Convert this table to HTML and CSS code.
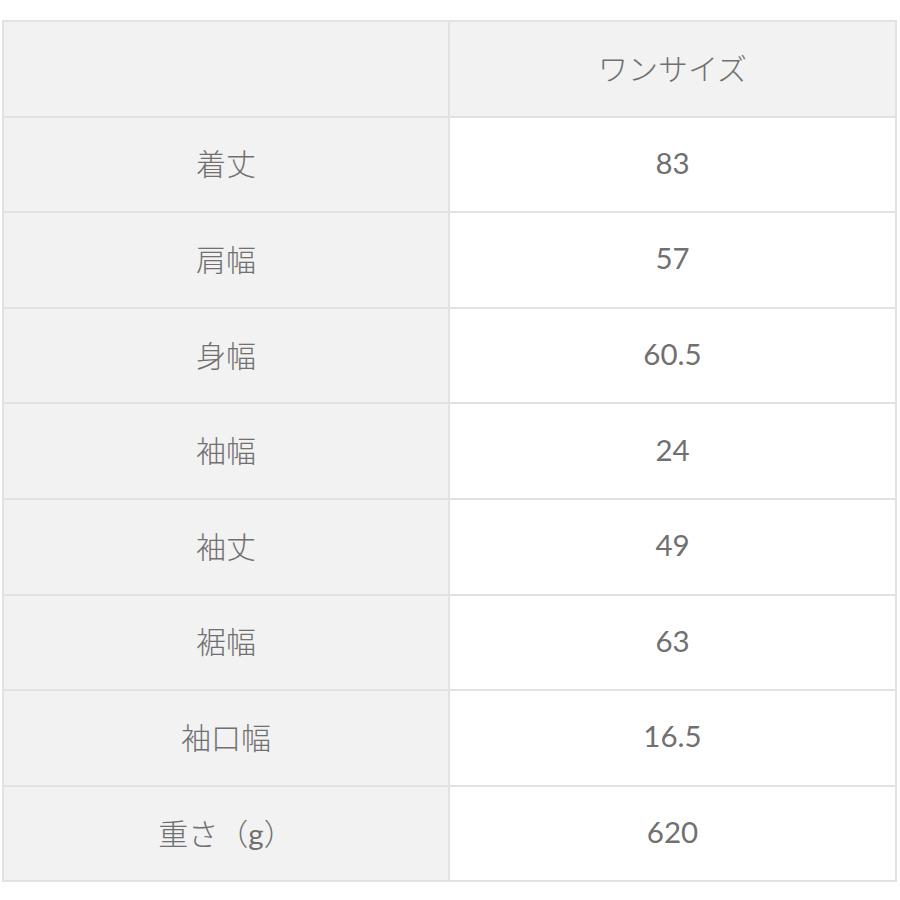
FILE: index.html
```html
<!DOCTYPE html>
<html lang="ja">
<head>
<meta charset="utf-8">
<title>サイズ表</title>
<link rel="stylesheet" href="styles.css">
</head>
<body>
<div class="wrap">
<table class="size-table">
  <thead>
    <tr><th class="label"></th><th class="head"><span class="jp">ワンサイズ</span></th></tr>
  </thead>
  <tbody>
    <tr><th class="label"><span class="jp">着丈</span></th><td>83</td></tr>
    <tr><th class="label"><span class="jp">肩幅</span></th><td>57</td></tr>
    <tr><th class="label"><span class="jp">身幅</span></th><td>60.5</td></tr>
    <tr><th class="label"><span class="jp">袖幅</span></th><td>24</td></tr>
    <tr><th class="label"><span class="jp">袖丈</span></th><td>49</td></tr>
    <tr><th class="label"><span class="jp">裾幅</span></th><td>63</td></tr>
    <tr><th class="label"><span class="jp">袖口幅</span></th><td>16.5</td></tr>
    <tr><th class="label"><span class="jp">重さ（</span>g<span class="jp">）</span></th><td>620</td></tr>
  </tbody>
</table>
</div>
</body>
</html>
```

FILE: styles.css
```css
html, body {
  margin: 0;
  padding: 0;
  background: #ffffff;
}
.wrap {
  padding: 20px 3px 0 2px;
}
.size-table {
  width: 895px;
  border-collapse: collapse;
  table-layout: fixed;
  font-family: Lato, "Noto Sans CJK JP", sans-serif;
  font-size: 29.5px;
  color: #707070;
}
.size-table th,
.size-table td {
  border: 2px solid #e2e2e2;
  height: 89.6px;
  padding: 0 0 4px 0;
  text-align: center;
  vertical-align: middle;
  font-weight: 400;
}
.size-table .label {
  background: #f2f2f2;
  width: 444px;
}
.size-table .head {
  background: #f2f2f2;
}
.size-table td {
  background: #ffffff;
}
.jp {
  font-family: "Noto Sans CJK JP", sans-serif;
  font-weight: 300;
  font-size: 30px;
}
```
